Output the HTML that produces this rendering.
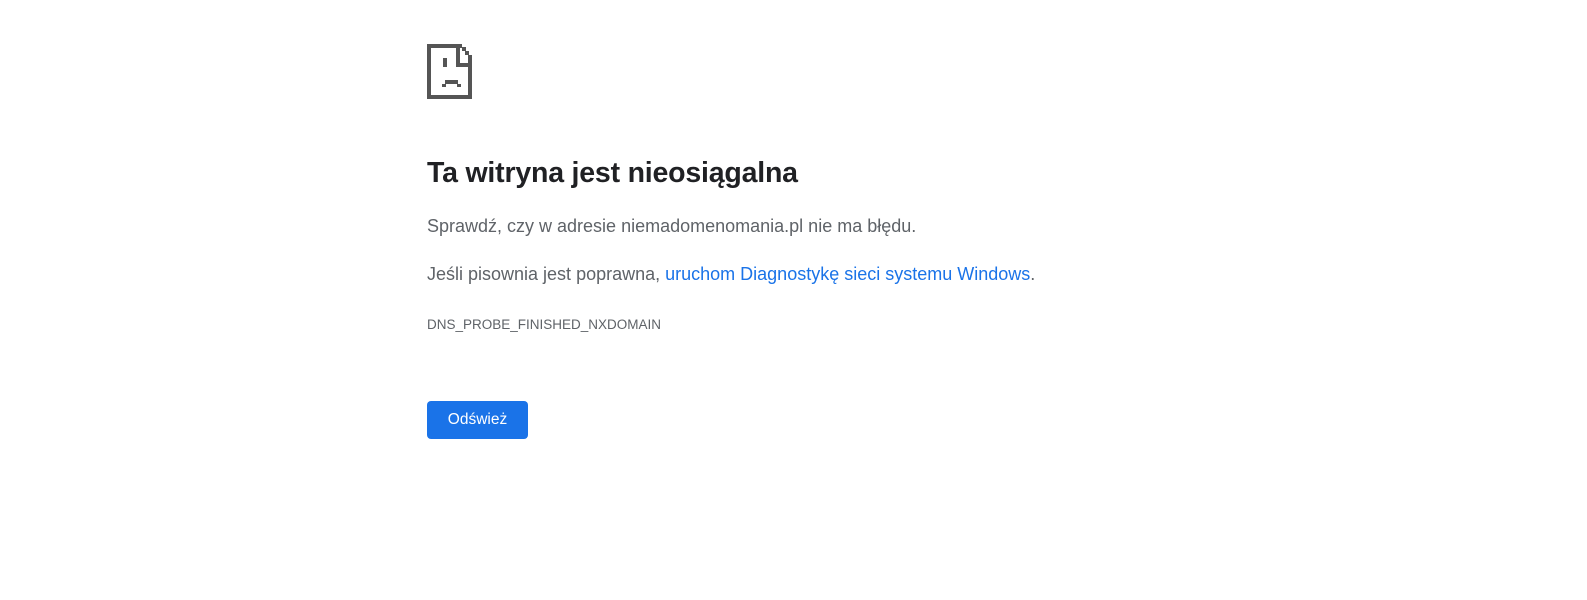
<!DOCTYPE html>
<html><head><meta charset="utf-8"><style>
html,body{margin:0;padding:0;background:#fff;width:1587px;height:600px;overflow:hidden}
body{font-family:"Liberation Sans",sans-serif;position:relative}
.icon{position:absolute;left:427px;top:44px}
h1{position:absolute;left:427px;top:157px;margin:0;font-size:28.5px;font-weight:bold;color:#202124;white-space:nowrap;letter-spacing:-0.2px}
.p{position:absolute;left:427px;margin:0;font-size:18px;color:#5f6368;white-space:nowrap}
a{color:#1a73e8;text-decoration:none}
.code{position:absolute;left:427px;top:317px;font-size:13.5px;color:#5f6368;white-space:nowrap}
.btn{position:absolute;left:427px;top:401px;width:101px;height:38px;background:#1a73e8;border-radius:4px;color:#fff;font-size:15.5px;line-height:38px;text-align:center}
</style></head><body>
<svg class="icon" width="45" height="55" viewBox="0 0 45 55" fill="#555555">
<rect x="0" y="0" width="35" height="4"/>
<rect x="0" y="0" width="4" height="55"/>
<rect x="0" y="51" width="45" height="4"/>
<rect x="41" y="15" width="4" height="40"/>
<rect x="29" y="0" width="4" height="21"/>
<rect x="29" y="19" width="16" height="4"/>
<rect x="35" y="3" width="4" height="4"/>
<rect x="38" y="7" width="4" height="4"/>
<rect x="41" y="11" width="4" height="4"/>
<rect x="16" y="14" width="4" height="9"/>
<rect x="18" y="36" width="13" height="4"/>
<rect x="15" y="40" width="4" height="3"/>
<rect x="30" y="40" width="4" height="3"/>
</svg>
<h1>Ta witryna jest nieosiągalna</h1>
<p class="p" style="top:216px">Sprawdź, czy w adresie niemadomenomania.pl nie ma błędu.</p>
<p class="p" style="top:264px">Jeśli pisownia jest poprawna, <a>uruchom Diagnostykę sieci systemu Windows</a>.</p>
<div class="code">DNS_PROBE_FINISHED_NXDOMAIN</div>
<div class="btn">Odśwież</div>
</body></html>
